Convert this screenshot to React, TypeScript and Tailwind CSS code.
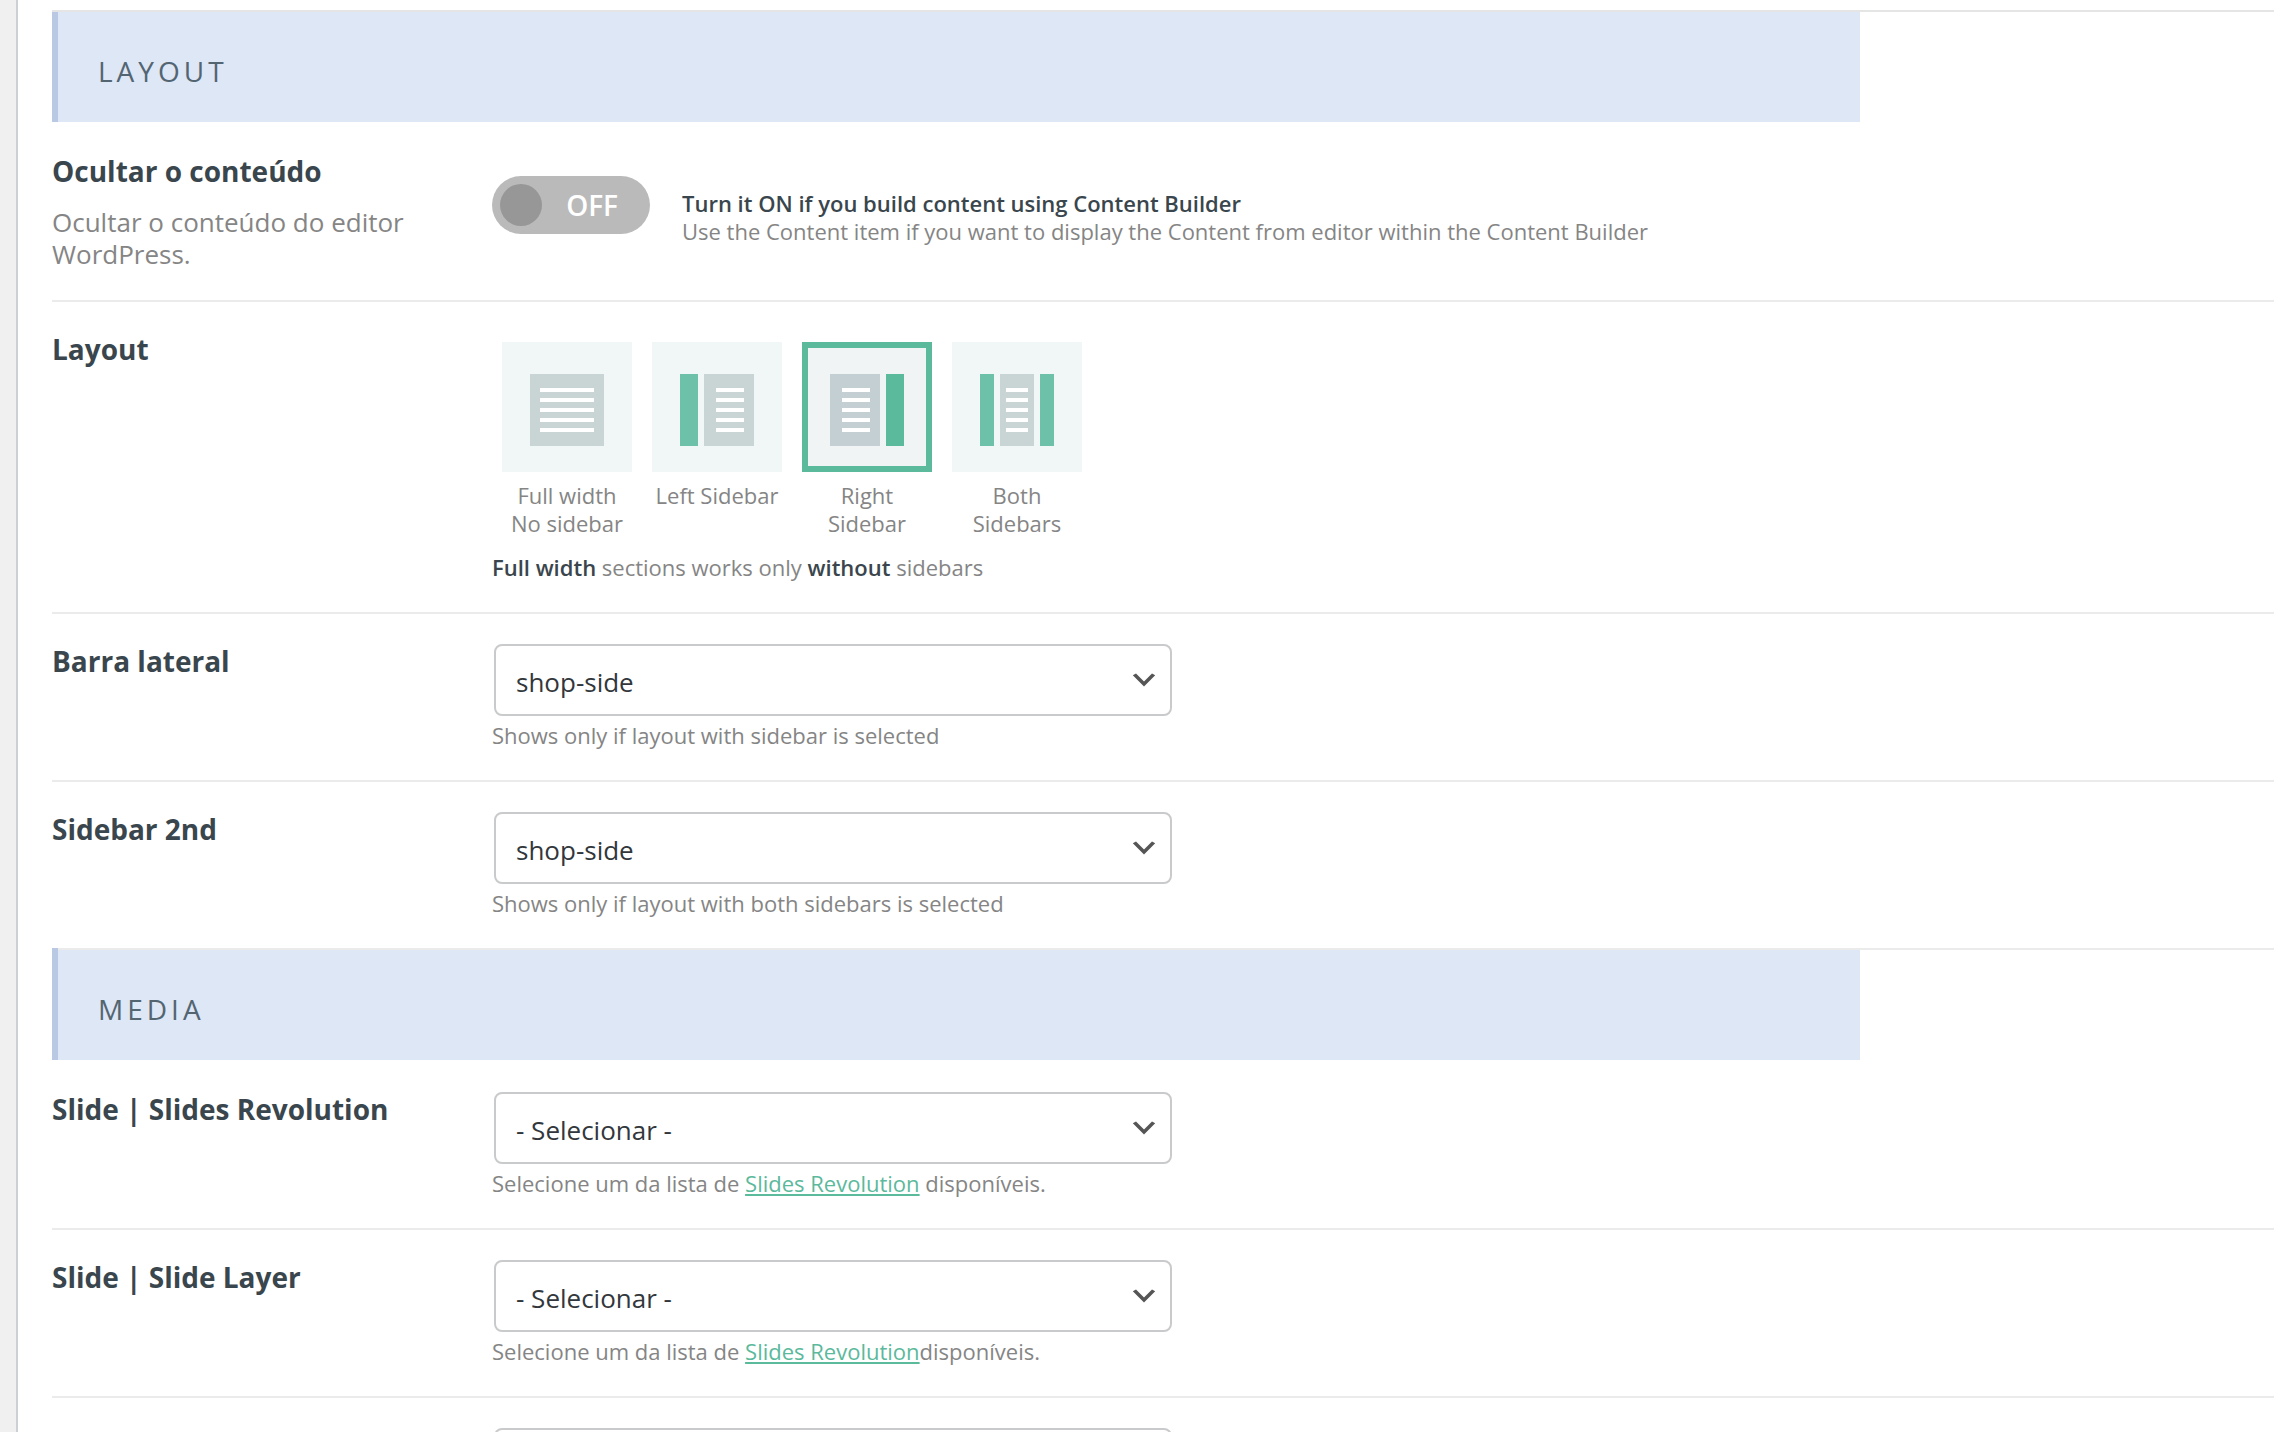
import { useState } from "react";
import type { ReactNode } from "react";

function SectionHeader({ title, divided }: { title: string; divided?: boolean }) {
  return (
    <div className={divided ? "-mt-0.5 mb-0.5 flex w-[1808px] max-w-full" : "mb-0.5 flex w-[1808px] max-w-full"}>
      <span className="w-1.5 bg-[#b9c9e3]" />
      <h2
        className={
          divided
            ? "flex-1 border-t-2 border-[#ebebeb] bg-[#dde7f6] px-10 pt-[41px] pb-[33px] text-[28px] leading-9 tracking-[4px] text-[#546572] uppercase"
            : "flex-1 bg-[#dde7f6] px-10 pt-[41px] pb-[33px] text-[28px] leading-9 tracking-[4px] text-[#546572] uppercase"
        }
      >
        {title}
      </h2>
    </div>
  );
}

function Row({
  title,
  htmlFor,
  description,
  children,
}: {
  title: string;
  htmlFor?: string;
  description?: string;
  children: ReactNode;
}) {
  return (
    <div className="flex border-b-2 border-[#ebebeb] pt-[30px]">
      <div className="w-[440px] shrink-0 pr-16">
        <label htmlFor={htmlFor} className="block text-[28px] leading-[34px] font-bold text-[#3a464d]">
          {title}
        </label>
        {description && (
          <p className="mt-[18px] text-[26px] leading-8 text-[#858585]">{description}</p>
        )}
      </div>
      <div className="min-w-0 flex-1">{children}</div>
    </div>
  );
}

function Select({ id, label, value }: { id: string; label?: string; value: string }) {
  return (
    <div className="relative ml-0.5 w-[678px] max-w-full">
      <select
        id={id}
        aria-label={label}
        defaultValue={value}
        className="block h-[72px] w-full appearance-none rounded-lg border-2 border-[#c9cacb] bg-white pt-1 pr-12 pl-5 text-[26px] leading-9 text-[#32373c]"
      >
        <option value={value}>{value}</option>
      </select>
      <svg
        viewBox="0 0 20 20"
        aria-hidden="true"
        className="pointer-events-none absolute top-5 right-3 size-8"
      >
        <path d="M5 6l5 5 5-5 2 1-7 7-7-7 2-1z" fill="#555" />
      </svg>
    </div>
  );
}

function Help({ children }: { children: ReactNode }) {
  return <p className="mt-[5px] mb-[31px] text-[22px] leading-7 text-[#858585]">{children}</p>;
}

function SlidesLink() {
  return (
    <a href="#slides" className="text-[#5bb99c] underline decoration-2 underline-offset-2">
      Slides Revolution
    </a>
  );
}

function Toggle() {
  const [on, setOn] = useState(false);
  return (
    <label className="flex h-[58px] w-[158px] shrink-0 cursor-pointer items-center rounded-full bg-[#bababa] pr-8 pl-2">
      <input
        id="hide-content"
        type="checkbox"
        checked={on}
        onChange={(e) => setOn(e.target.checked)}
        className="sr-only"
      />
      <span className="size-[42px] rounded-full bg-[#979797]" />
      <span className="ml-auto text-[28px] leading-9 font-semibold text-white">{on ? "ON" : "OFF"}</span>
    </label>
  );
}

type Block = { x: number; w: number; bar?: boolean };

const layouts: { id: string; label: string; blocks: Block[]; line: [number, number] }[] = [
  { id: "full", label: "Full width No sidebar", blocks: [{ x: 28, w: 74 }], line: [38, 54] },
  { id: "left", label: "Left Sidebar", blocks: [{ x: 28, w: 18, bar: true }, { x: 52, w: 50 }], line: [64, 28] },
  { id: "right", label: "Right Sidebar", blocks: [{ x: 28, w: 50 }, { x: 84, w: 18, bar: true }], line: [40, 28] },
  {
    id: "both",
    label: "Both Sidebars",
    blocks: [{ x: 28, w: 14, bar: true }, { x: 48, w: 34 }, { x: 88, w: 14, bar: true }],
    line: [54, 22],
  },
];

function LayoutPicker() {
  const [selected, setSelected] = useState("right");
  return (
    <div className="mt-[10px] ml-[10px] flex gap-5">
      {layouts.map(({ id, label, blocks, line }) => {
        const active = id === selected;
        return (
          <label key={id} className="w-[130px] cursor-pointer text-center text-[22px] leading-7 text-[#858585]">
            <input
              type="radio"
              name="layout"
              value={id}
              checked={active}
              onChange={() => setSelected(id)}
              className="sr-only"
            />
            <svg viewBox="0 0 130 130" aria-hidden="true" className="mb-[9px] block size-[130px]">
              <rect width="130" height="130" fill={active ? "#f0f4f5" : "#f1f6f7"} />
              {blocks.map((b) => (
                <rect
                  key={b.x}
                  x={b.x}
                  y="32"
                  width={b.w}
                  height="72"
                  fill={b.bar ? (active ? "#5bb99c" : "#6cc1a8") : active ? "#c3cfd2" : "#c9d5d5"}
                />
              ))}
              {[0, 1, 2, 3, 4].map((i) => (
                <rect key={i} x={line[0]} y={46 + i * 10} width={line[1]} height="4" fill="#fff" />
              ))}
              {active && (
                <rect x="3" y="3" width="124" height="124" fill="none" stroke="#5bb99c" strokeWidth="6" />
              )}
            </svg>
            {label}
          </label>
        );
      })}
    </div>
  );
}

export default function App() {
  return (
    <div className="flex h-screen overflow-hidden bg-[#f0f0f0] pl-4 font-['Open_Sans',sans-serif]">
      <main className="min-w-0 flex-1 border-l-2 border-[#ccd0d4] bg-white pt-[10px] pr-5 pl-[34px]">
        <section className="border-t-2 border-[#e5e5e5]">
          <SectionHeader title="Layout" />
          <Row
            title="Ocultar o conteúdo"
            htmlFor="hide-content"
            description="Ocultar o conteúdo do editor WordPress."
          >
            <div className="mt-[22px] mb-[55px] flex gap-8">
              <Toggle />
              <p className="pt-[13px] text-[22px] leading-7 text-[#858585]">
                <strong className="block font-semibold text-[#3a464d]">
                  Turn it ON if you build content using Content Builder
                </strong>
                Use the Content item if you want to display the Content from editor within the Content Builder
              </p>
            </div>
          </Row>
          <Row title="Layout">
            <LayoutPicker />
            <p className="mt-4 mb-[31px] text-[22px] leading-7 text-[#858585]">
              <strong className="font-semibold text-[#3a464d]">Full width</strong> sections works only{" "}
              <strong className="font-semibold text-[#3a464d]">without</strong> sidebars
            </p>
          </Row>
          <Row title="Barra lateral" htmlFor="sidebar">
            <Select id="sidebar" value="shop-side" />
            <Help>Shows only if layout with sidebar is selected</Help>
          </Row>
          <Row title="Sidebar 2nd" htmlFor="sidebar-2">
            <Select id="sidebar-2" value="shop-side" />
            <Help>Shows only if layout with both sidebars is selected</Help>
          </Row>
        </section>
        <section>
          <SectionHeader title="Media" divided />
          <Row title="Slide | Slides Revolution" htmlFor="slider">
            <Select id="slider" value="- Selecionar -" />
            <Help>
              Selecione um da lista de <SlidesLink /> disponíveis.
            </Help>
          </Row>
          <Row title="Slide | Slide Layer" htmlFor="slider-layer">
            <Select id="slider-layer" value="- Selecionar -" />
            <Help>
              Selecione um da lista de <SlidesLink />
              disponíveis.
            </Help>
          </Row>
          <div className="flex pt-[30px] pl-[440px]">
            <Select id="slider-extra" label="Slide" value="- Selecionar -" />
          </div>
        </section>
      </main>
    </div>
  );
}
